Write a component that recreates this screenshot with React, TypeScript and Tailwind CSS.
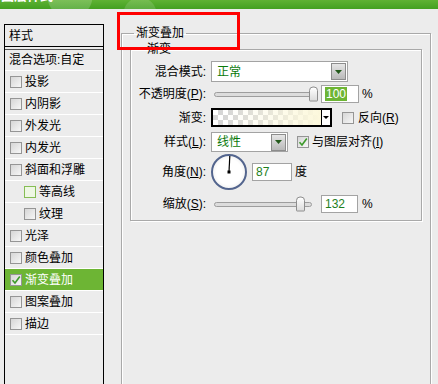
import type { ReactNode } from 'react';

const font = "font-['Liberation_Sans','Noto_Sans_CJK_SC',sans-serif]";

function Check({ checked, hover }: { checked?: boolean; hover?: boolean }) {
  return (
    <span
      className={`relative flex h-[12px] w-[12px] shrink-0 items-center justify-center border ${
        hover ? 'border-[#86bd55] bg-[#eef7e4]' : 'border-[#959595] bg-gradient-to-br from-[#d6d6d6] to-[#f7f7f7]'
      }`}
    >
      {checked && (
        <svg width="10" height="10" viewBox="0 0 10 10">
          <path d="M1.5 5.2 L4 8 L8.8 1.5" fill="none" stroke="#3d9a2a" strokeWidth="1.6" />
        </svg>
      )}
    </span>
  );
}

function Key({ k }: { k: string }) {
  return (
    <>
      (<span className="underline">{k}</span>)
    </>
  );
}

function Select({ value, width }: { value: string; width: string }) {
  return (
    <div className={`flex h-full ${width} items-center justify-between border border-[#a3a3a3] bg-white pl-[5px] pr-[1px]`}>
      <span className="text-[12px] text-[#0a7a0a]">{value}</span>
      <span className="flex h-[17px] w-[15px] items-center justify-center border border-[#8c8c8c] bg-gradient-to-b from-[#e6e6e6] to-[#b9b9b9]">
        <svg width="7" height="4" viewBox="0 0 7 4">
          <path d="M0 0 H7 L3.5 4 Z" fill="#245a1c" />
        </svg>
      </span>
    </div>
  );
}

function Slider({ pos }: { pos: number }) {
  return (
    <div className="relative ml-[3px] flex h-full w-[98px] items-center">
      <div className="h-[5px] w-full rounded-full border border-[#9d9d9d] bg-[#dcdcdc]" />
      <div
        className="absolute top-1/2 h-[15px] w-[9px] -translate-y-1/2 rounded-t-[4px] rounded-b-[1px] border border-[#8d8d8d] bg-gradient-to-b from-white to-[#dcdcdc]"
        style={{ left: pos }}
      />
    </div>
  );
}

function Box({ children, width, className = '' }: { children: ReactNode; width: string; className?: string }) {
  return (
    <div className={`flex h-[18px] ${width} items-center border border-[#a3a3a3] bg-white pl-[3px] text-[12px] ${className}`}>
      {children}
    </div>
  );
}

function Row({ label, children, h, mt }: { label: ReactNode; children: ReactNode; h: string; mt: string }) {
  return (
    <div className={`flex ${h} ${mt} items-center`}>
      <div className="w-[75px] text-right text-[12px] leading-none">{label}</div>
      <div className="ml-[5px] flex h-full items-center">{children}</div>
    </div>
  );
}

const styles = [
  { label: '投影' },
  { label: '内阴影' },
  { label: '外发光' },
  { label: '内发光' },
  { label: '斜面和浮雕' },
  { label: '等高线', indent: true, hover: true },
  { label: '纹理', indent: true },
  { label: '光泽' },
  { label: '颜色叠加' },
  { label: '渐变叠加', active: true },
  { label: '图案叠加' },
  { label: '描边' },
];

export default function App() {
  return (
    <div className={`relative h-[384px] w-[438px] overflow-hidden bg-[#ececec] text-black ${font}`}>
      {/* title bar */}
      <div className="h-[9px] overflow-hidden bg-[radial-gradient(circle_at_70px_-4px,rgba(255,255,255,0.18)_0_22px,transparent_23px),radial-gradient(circle_at_140px_14px,rgba(255,255,255,0.14)_0_16px,transparent_17px),linear-gradient(to_bottom,#5fb234,#43a021)]">
        <div className="-mt-[12px] pl-[1px] text-[13px] font-bold leading-[16px] text-white">图层样式</div>
      </div>

      <div className="flex items-start">
        {/* left list */}
        <div className="ml-[4px] mt-[15px] h-[400px] w-[100px] border-x border-t border-black">
          <div className="flex h-[22px] items-center border-b border-black pl-[4px] text-[12px]">样式</div>
          <div className="mt-[2px] flex h-[22px] items-center border-t border-[#555] border-b border-b-white pl-[4px] text-[12px]">
            混合选项:自定
          </div>
          {styles.map((s) => (
            <div
              key={s.label}
              className={`flex h-[22px] items-center gap-[3px] border-b border-white text-[12px] ${
                s.indent ? 'pl-[19px]' : 'pl-[5px]'
              } ${s.active ? 'bg-[#6db534] text-white' : ''}`}
            >
              <Check checked={s.active} hover={s.hover} />
              <span>{s.label}</span>
            </div>
          ))}
        </div>

        {/* right panel */}
        <fieldset className="ml-[17px] mt-[16px] h-[420px] w-[310px] border border-[#a9a9a9] px-[8px] pt-0 shadow-[inset_1px_1px_0_#fff,1px_1px_0_#fff]">
          <legend className="ml-[4px] px-[2px] text-[12px] leading-[16px]">渐变叠加</legend>
          <fieldset className="border border-[#a9a9a9] pb-[7px] pt-[4px] shadow-[inset_1px_1px_0_#fff,1px_1px_0_#fff]">
            <legend className="ml-[14px] px-[2px] text-[12px] leading-[16px]">渐变</legend>

            <Row label="混合模式:" h="h-[21px]" mt="mt-0">
              <Select value="正常" width="w-[137px]" />
            </Row>

            <Row label={<>不透明度<Key k="P" />:</>} h="h-[18px]" mt="mt-[3px]">
              <Slider pos={95} />
              <Box width="w-[38px]" className="ml-[9px]">
                <span className="bg-[#6db534] px-[1px] leading-[14px] text-white">100</span>
              </Box>
              <span className="ml-[3px] text-[12px]">%</span>
            </Row>

            <Row label="渐变:" h="h-[19px]" mt="mt-[5px]">
              <div className="flex h-full w-[121px] border-2 border-black">
                <div className="h-full flex-1 bg-[linear-gradient(to_right,rgba(255,251,224,0)_10%,#fcf8dc),repeating-conic-gradient(#d6d6d6_0_25%,#fff_0_50%)] bg-[length:100%_100%,10px_10px]" />
                <div className="flex w-[9px] items-center justify-center border-l border-black bg-white">
                  <svg width="6" height="3" viewBox="0 0 6 3">
                    <path d="M0 0 H6 L3 3 Z" fill="#000" />
                  </svg>
                </div>
              </div>
              <div className="ml-[10px] flex items-center gap-[4px] text-[12px]">
                <Check />
                <span>反向<Key k="R" /></span>
              </div>
            </Row>

            <Row label={<>样式<Key k="L" />:</>} h="h-[20px]" mt="mt-[5px]">
              <Select value="线性" width="w-[77px]" />
              <div className="ml-[9px] flex items-center gap-[3px] text-[12px]">
                <Check checked />
                <span>与图层对齐<Key k="I" /></span>
              </div>
            </Row>

            <Row label={<>角度<Key k="N" />:</>} h="h-[36px]" mt="mt-[2px]">
              <div className="relative h-[36px] w-[36px] rounded-full border-2 border-[#53658e] bg-[radial-gradient(circle,#fff_55%,#e2e2e2)]">
                <svg className="absolute inset-0" width="32" height="32" viewBox="0 0 32 32">
                  <line x1="16" y1="16" x2="16.8" y2="0" stroke="#000" strokeWidth="1.2" />
                  <rect x="14.5" y="14.5" width="3" height="3" fill="#000" />
                </svg>
              </div>
              <Box width="w-[40px]" className="ml-[5px] text-[#1d7f1d]">87</Box>
              <span className="ml-[3px] text-[12px]">度</span>
            </Row>

            <Row label={<>缩放<Key k="S" />:</>} h="h-[18px]" mt="mt-[5px]">
              <Slider pos={82} />
              <Box width="w-[37px]" className="ml-[9px] text-[#1d7f1d]">132</Box>
              <span className="ml-[4px] text-[12px]">%</span>
            </Row>
          </fieldset>
        </fieldset>
      </div>

      {/* annotation box */}
      <div className="absolute left-[117px] top-[12px] h-[38px] w-[123px] border-[3px] border-[#ff0000]" />
    </div>
  );
}
